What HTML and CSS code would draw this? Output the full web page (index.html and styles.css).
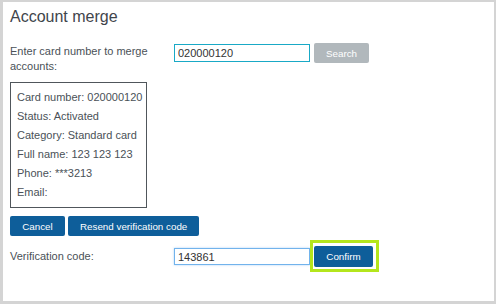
FILE: index.html
```html
<!DOCTYPE html>
<html lang="en">
<head>
    <meta charset="UTF-8">
    <title>Account merge</title>
    <link rel="stylesheet" href="styles.css">
</head>
<body>
    <div class="panel">
        <h1 class="title">Account merge</h1>
        <div class="form-row">
            <label class="field-label" for="cardNumber">Enter card number to merge accounts:</label>
            <input id="cardNumber" class="field-input card-input" type="text" value="020000120">
            <button class="btn btn-disabled" type="button">Search</button>
        </div>
        <div class="card-info">
            <p>Card number: 020000120</p>
            <p>Status: Activated</p>
            <p>Category: Standard card</p>
            <p>Full name: 123 123 123</p>
            <p>Phone: ***3213</p>
            <p>Email:</p>
        </div>
        <div class="actions">
            <button class="btn btn-cancel" type="button">Cancel</button>
            <button class="btn" type="button">Resend verification code</button>
        </div>
        <div class="form-row verify-row">
            <label class="field-label" for="verifyCode">Verification code:</label>
            <input id="verifyCode" class="field-input code-input" type="text" value="143861">
            <span class="highlight">
                <button class="btn" type="button">Confirm</button>
            </span>
        </div>
    </div>
</body>
</html>
```

FILE: styles.css
```css
* {
    box-sizing: border-box;
}
body {
    margin: 0;
    font-family: "Liberation Sans", Arial, sans-serif;
    background: #fff;
}
.panel {
    height: 304px;
    border-style: solid;
    border-color: #d4d4d4;
    border-width: 2px 2px 3px 3px;
    padding: 6px 7px 0;
    color: #4a5157;
}
.title {
    margin: 0 0 17px;
    font-size: 16px;
    line-height: 18px;
    font-weight: normal;
    color: #3f454b;
}
.form-row {
    display: flex;
    align-items: flex-start;
}
.field-label {
    width: 164px;
    margin-top: 1px;
    padding-right: 20px;
    font-size: 11px;
    line-height: 15px;
}
.field-input {
    width: 136px;
    height: 18px;
    margin: 1px 4px 0 0;
    padding: 0 3px;
    border: 1px solid #19a9c6;
    font-family: inherit;
    font-size: 11px;
    color: #333;
    outline: none;
}
.btn {
    height: 20px;
    padding: 0 12px;
    border: none;
    border-radius: 2px;
    background: #0e5e9a;
    color: #fff;
    font-family: inherit;
    font-size: 9.8px;
    cursor: pointer;
}
.btn-cancel {
    width: 55px;
    padding: 0;
}
.btn-disabled {
    width: 55px;
    padding: 0;
    background: #b1b8bc;
}
.card-info {
    width: 137px;
    margin-top: 8px;
    padding: 5px 4px 5px 6px;
    border: 1px solid #50565b;
    font-size: 11px;
    line-height: 19px;
    white-space: nowrap;
}
.card-info p {
    margin: 0;
}
.actions {
    display: flex;
    gap: 3px;
    margin-top: 8px;
}
.verify-row {
    align-items: center;
    margin-top: 10px;
}
.verify-row .field-label {
    margin-top: 0;
}
.code-input {
    height: 17px;
    margin-top: 0;
    border-color: #72b3ec;
    box-shadow: 0 0 2px rgba(114, 179, 236, 0.6);
}
.highlight {
    position: relative;
    display: inline-block;
}
.highlight .btn {
    width: 59px;
    padding: 0;
    height: 21px;
    display: block;
}
.highlight::after {
    content: "";
    position: absolute;
    top: -6px;
    left: -4px;
    right: -6px;
    bottom: -5px;
    border: 3px solid #b4e61c;
    pointer-events: none;
}
```
